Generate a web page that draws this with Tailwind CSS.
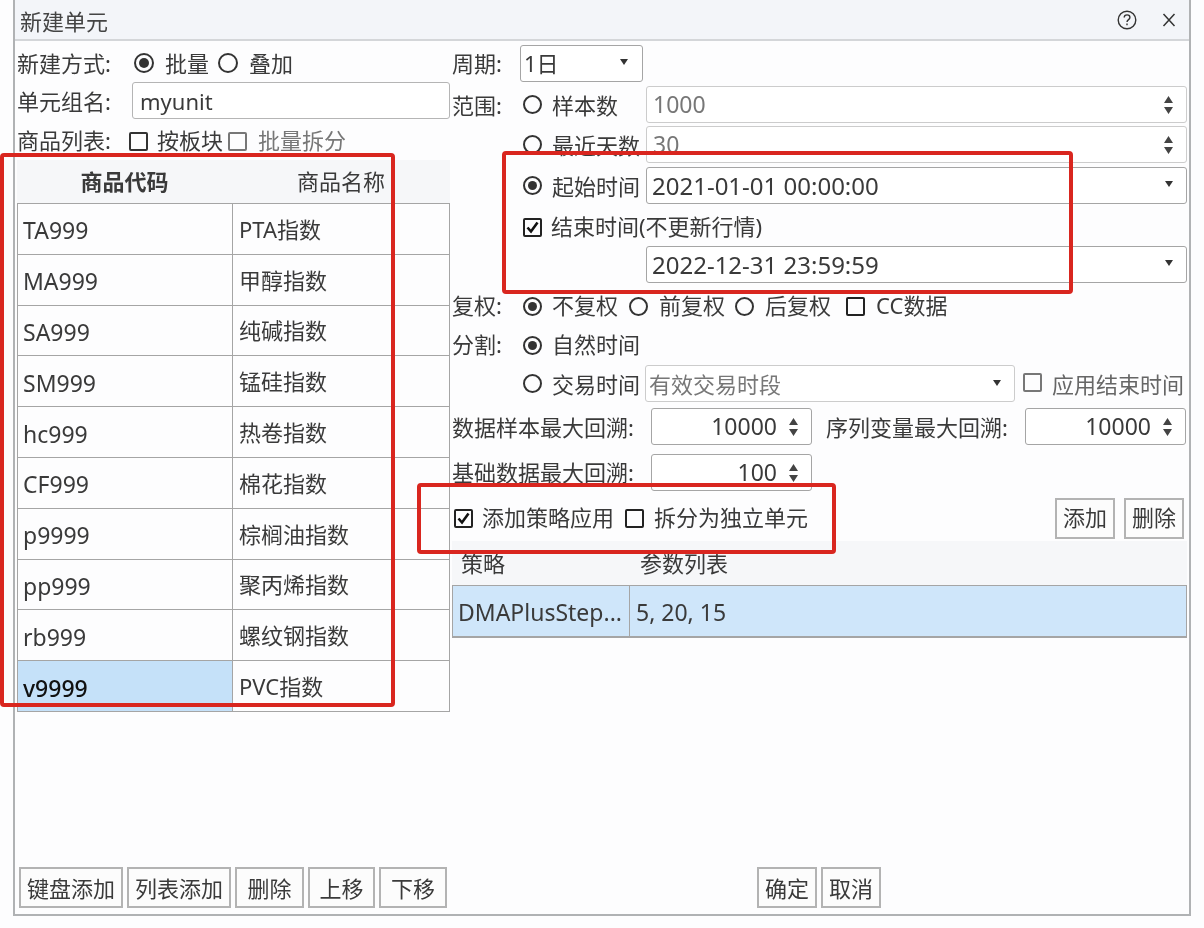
<!DOCTYPE html>
<html lang="zh-CN">
<head>
    <meta charset="UTF-8">
    <title>新建单元</title>
    <script src="https://cdn.jsdelivr.net/npm/@tailwindcss/browser@4"></script>
</head>
<body class="bg-white">
<div class="relative w-[1204px] h-[928px] overflow-hidden bg-[#fdfdfe] text-[22px] leading-none text-[#3a3a3a] font-['Noto_Sans','Noto_Sans_CJK_SC',sans-serif] blur-[0.4px]">
    <!-- Window -->
    <div class="ml-[13px] w-[1178px] h-[916px] flex flex-col border-x-2 border-b-2 border-[#b0b2b4]">
        <!-- Title bar -->
        <div class="h-[41px] shrink-0 flex items-center bg-[#f3f5f9] border-b-2 border-[#d4d6d9]">
            <span class="ml-[5px] pt-[3px] text-[#444]">新建单元</span>
            <svg class="ml-auto" width="20" height="20" viewBox="0 0 20 20" fill="none" stroke="#333" stroke-width="1.4"><circle cx="10" cy="10" r="8.8"/><path d="M7.2 7.6c0-1.7 1.3-2.7 2.9-2.7s2.8 1 2.8 2.5c0 2.3-2.9 2.2-2.9 4.7"/><path d="M10 13.6v1.7"/></svg>
            <svg class="ml-[25px] mr-[13px]" width="14" height="14" viewBox="0 0 14 14" fill="none" stroke="#333" stroke-width="1.5"><path d="M1.5 1L12.5 13M12.5 1L1.5 13"/></svg>
        </div>

        <div class="flex-1 flex min-h-0">
            <!-- Left column -->
            <div class="ml-[2px] w-[433px] shrink-0 flex flex-col pt-[3px] pb-[6px]">
                <div class="h-[38px] flex items-center">
                    <span class="w-[117px]">新建方式:</span>
                    <span class="w-[20px] h-[20px] rounded-full border-2 border-[#333] flex items-center justify-center"><span class="w-[10px] h-[10px] rounded-full bg-[#333]"></span></span>
                    <span class="ml-[11px]">批量</span>
                    <span class="ml-[9px] w-[20px] h-[20px] rounded-full border-2 border-[#333]"></span>
                    <span class="ml-[11px]">叠加</span>
                </div>
                <div class="h-[37px] flex items-center">
                    <span class="w-[115px]">单元组名:</span>
                    <div class="w-[318px] h-[37px] bg-white border border-[#b5b5b5] rounded-[3px] flex items-center pl-[7px]">myunit</div>
                </div>
                <div class="mt-[3px] h-[38px] flex items-center">
                    <span class="w-[112px] pb-[2px]">商品列表:</span>
                    <span class="w-[19px] h-[19px] border-2 border-[#333] rounded-[2px]"></span>
                    <span class="ml-[9px] pb-[2px]">按板块</span>
                    <span class="ml-[5px] w-[19px] h-[19px] border-2 border-[#777] rounded-[2px]"></span>
                    <span class="ml-[11px] pb-[2px] text-[#777]">批量拆分</span>
                </div>

                <!-- Product table -->
                <div class="h-[44px] flex items-center bg-[#f6f7f9] border-b border-[#a5a5a5]">
                    <span class="w-[215px] pb-[2px] text-center font-bold">商品代码</span>
                    <span class="flex-1 pb-[2px] text-center">商品名称</span>
                </div>
                <div class="border-x border-[#a5a5a5]">
                    <div class="h-[50.8px] flex border-b border-[#a5a5a5]"><span class="w-[215px] pl-[5px] pt-[4px] text-[23px] flex items-center border-r border-[#a5a5a5]">TA999</span><span class="pl-[6px] flex items-center">PTA指数</span></div>
                    <div class="h-[50.8px] flex border-b border-[#a5a5a5]"><span class="w-[215px] pl-[5px] pt-[4px] text-[23px] flex items-center border-r border-[#a5a5a5]">MA999</span><span class="pl-[6px] flex items-center">甲醇指数</span></div>
                    <div class="h-[50.8px] flex border-b border-[#a5a5a5]"><span class="w-[215px] pl-[5px] pt-[4px] text-[23px] flex items-center border-r border-[#a5a5a5]">SA999</span><span class="pl-[6px] flex items-center">纯碱指数</span></div>
                    <div class="h-[50.8px] flex border-b border-[#a5a5a5]"><span class="w-[215px] pl-[5px] pt-[4px] text-[23px] flex items-center border-r border-[#a5a5a5]">SM999</span><span class="pl-[6px] flex items-center">锰硅指数</span></div>
                    <div class="h-[50.8px] flex border-b border-[#a5a5a5]"><span class="w-[215px] pl-[5px] pt-[4px] text-[23px] flex items-center border-r border-[#a5a5a5]">hc999</span><span class="pl-[6px] flex items-center">热卷指数</span></div>
                    <div class="h-[50.8px] flex border-b border-[#a5a5a5]"><span class="w-[215px] pl-[5px] pt-[4px] text-[23px] flex items-center border-r border-[#a5a5a5]">CF999</span><span class="pl-[6px] flex items-center">棉花指数</span></div>
                    <div class="h-[50.8px] flex border-b border-[#a5a5a5]"><span class="w-[215px] pl-[5px] pt-[4px] text-[23px] flex items-center border-r border-[#a5a5a5]">p9999</span><span class="pl-[6px] flex items-center">棕榈油指数</span></div>
                    <div class="h-[50.8px] flex border-b border-[#a5a5a5]"><span class="w-[215px] pl-[5px] pt-[4px] text-[23px] flex items-center border-r border-[#a5a5a5]">pp999</span><span class="pl-[6px] flex items-center">聚丙烯指数</span></div>
                    <div class="h-[50.8px] flex border-b border-[#a5a5a5]"><span class="w-[215px] pl-[5px] pt-[4px] text-[23px] flex items-center border-r border-[#a5a5a5]">rb999</span><span class="pl-[6px] flex items-center">螺纹钢指数</span></div>
                    <div class="h-[50.8px] flex border-b border-[#a5a5a5]"><span class="w-[215px] pl-[5px] pt-[4px] text-[23px] flex items-center border-r border-[#a5a5a5] bg-[#c5e1f9] text-[#111] font-medium">v9999</span><span class="pl-[6px] flex items-center">PVC指数</span></div>
                </div>

                <!-- Left buttons -->
                <div class="mt-auto ml-[2px] flex gap-[4px] h-[41px]">
                    <button class="w-[104px] border-2 border-[#b3b3b3] bg-[#fcfcfc]">键盘添加</button>
                    <button class="w-[104px] border-2 border-[#b3b3b3] bg-[#fcfcfc]">列表添加</button>
                    <button class="w-[69px] border-2 border-[#b3b3b3] bg-[#fcfcfc]">删除</button>
                    <button class="w-[67px] border-2 border-[#b3b3b3] bg-[#fcfcfc]">上移</button>
                    <button class="w-[68px] border-2 border-[#b3b3b3] bg-[#fcfcfc]">下移</button>
                </div>
            </div>

            <!-- Right column -->
            <div class="ml-[2px] w-[735px] shrink-0 flex flex-col pt-[4px] pb-[6px]">
                <div class="h-[37px] flex items-center">
                    <span class="w-[68px] pb-[2px]">周期:</span>
                    <div class="w-[123px] h-[37px] bg-white border border-[#a5a5a5] rounded-[3px] flex items-center justify-between pl-[3px] pr-[14px]"><span class="pb-[2px]">1日</span><svg class="mb-[4px]" width="8" height="6" viewBox="0 0 8 6"><path d="M0 0h8L4 6z" fill="#333"/></svg></div>
                </div>
                <div class="mt-[4px] h-[37px] flex items-center">
                    <span class="w-[71px]">范围:</span>
                    <span class="w-[19px] h-[19px] rounded-full border-2 border-[#333]"></span>
                    <span class="ml-[10px] w-[94px]">样本数</span>
                    <div class="w-[541px] h-[37px] bg-white border border-[#ccc] rounded-[3px] flex items-center justify-between pl-[6px] pr-[13px] text-[#777] text-[23px]"><span>1000</span>
                        <svg width="9" height="18" viewBox="0 0 9 18" fill="#444"><path d="M4.5 0L9 7H0zM4.5 18L9 11H0z"/></svg>
                    </div>
                </div>
                <div class="mt-[3px] h-[37px] flex items-center">
                    <span class="ml-[71px] w-[19px] h-[19px] rounded-full border-2 border-[#333]"></span>
                    <span class="ml-[10px] w-[94px]">最近天数</span>
                    <div class="w-[541px] h-[37px] bg-white border border-[#ccc] rounded-[3px] flex items-center justify-between pl-[6px] pr-[13px] text-[#777] text-[23px]"><span>30</span>
                        <svg width="9" height="18" viewBox="0 0 9 18" fill="#444"><path d="M4.5 0L9 7H0zM4.5 18L9 11H0z"/></svg>
                    </div>
                </div>
                <div class="mt-[4px] h-[37px] flex items-center">
                    <span class="ml-[71px] w-[19px] h-[19px] rounded-full border-2 border-[#333] flex items-center justify-center"><span class="w-[9px] h-[9px] rounded-full bg-[#333]"></span></span>
                    <span class="ml-[10px] w-[94px]">起始时间</span>
                    <div class="w-[541px] h-[37px] bg-white border border-[#a5a5a5] rounded-[3px] flex items-center justify-between pl-[5px] pr-[13px] text-[24px]"><span>2021-01-01 00:00:00</span>
                        <svg class="mb-[4px]" width="8" height="6" viewBox="0 0 8 6"><path d="M0 0h8L4 6z" fill="#333"/></svg>
                    </div>
                </div>
                <div class="mt-[4px] h-[38px] flex items-center">
                    <span class="ml-[71px] w-[19px] h-[19px] border-2 border-[#222] rounded-[2px] flex items-center justify-center"><svg width="13" height="13" viewBox="0 0 13 13" fill="none" stroke="#111" stroke-width="2.6"><path d="M1.5 6.5l3.5 4 6.5-9"/></svg></span>
                    <span class="ml-[9px] pb-[2px]">结束时间(不更新行情)</span>
                </div>
                <div class="h-[37px] flex justify-end">
                    <div class="w-[541px] h-[37px] bg-white border border-[#a5a5a5] rounded-[3px] flex items-center justify-between pl-[5px] pr-[13px] text-[24px]"><span>2022-12-31 23:59:59</span>
                        <svg class="mb-[4px]" width="8" height="6" viewBox="0 0 8 6"><path d="M0 0h8L4 6z" fill="#333"/></svg>
                    </div>
                </div>
                <div class="mt-[4px] h-[38px] flex items-center">
                    <span class="w-[71px] pb-[2px]">复权:</span>
                    <span class="w-[19px] h-[19px] rounded-full border-2 border-[#333] flex items-center justify-center"><span class="w-[9px] h-[9px] rounded-full bg-[#333]"></span></span>
                    <span class="ml-[10px] pb-[2px]">不复权</span>
                    <span class="ml-[11px] w-[19px] h-[19px] rounded-full border-2 border-[#333]"></span>
                    <span class="ml-[11px] pb-[2px]">前复权</span>
                    <span class="ml-[10px] w-[19px] h-[19px] rounded-full border-2 border-[#333]"></span>
                    <span class="ml-[11px] pb-[2px]">后复权</span>
                    <span class="ml-[15px] w-[19px] h-[19px] border-2 border-[#222] rounded-[2px]"></span>
                    <span class="ml-[11px] pb-[2px]">CC数据</span>
                </div>
                <div class="mt-[1px] h-[38px] flex items-center">
                    <span class="w-[71px] pb-[2px]">分割:</span>
                    <span class="w-[19px] h-[19px] rounded-full border-2 border-[#333] flex items-center justify-center"><span class="w-[9px] h-[9px] rounded-full bg-[#333]"></span></span>
                    <span class="ml-[10px] pb-[2px]">自然时间</span>
                </div>
                <div class="mt-[1px] h-[37px] flex items-center">
                    <span class="ml-[71px] w-[19px] h-[19px] rounded-full border-2 border-[#333]"></span>
                    <span class="ml-[10px] w-[93px]">交易时间</span>
                    <div class="w-[370px] h-[37px] bg-white border border-[#ccc] rounded-[3px] flex items-center justify-between pl-[3px] pr-[13px] text-[#777]"><span>有效交易时段</span>
                        <svg class="mb-[2px]" width="8" height="6" viewBox="0 0 8 6"><path d="M0 0h8L4 6z" fill="#333"/></svg>
                    </div>
                    <span class="ml-[8px] mb-[2px] w-[19px] h-[19px] border-2 border-[#777] rounded-[2px]"></span>
                    <span class="ml-[10px] text-[#666]">应用结束时间</span>
                </div>
                <div class="mt-[6px] h-[37px] flex items-center">
                    <span class="w-[199px]">数据样本最大回溯:</span>
                    <div class="w-[161px] h-[37px] bg-white border border-[#a5a5a5] rounded-[3px] flex items-center justify-end gap-[12px] pr-[13px] text-[23px]"><span>10000</span>
                        <svg width="9" height="18" viewBox="0 0 9 18" fill="#444"><path d="M4.5 0L9 7H0zM4.5 18L9 11H0z"/></svg>
                    </div>
                    <span class="ml-[14px] w-[199px]">序列变量最大回溯:</span>
                    <div class="w-[161px] h-[37px] bg-white border border-[#a5a5a5] rounded-[3px] flex items-center justify-end gap-[12px] pr-[13px] text-[23px]"><span>10000</span>
                        <svg width="9" height="18" viewBox="0 0 9 18" fill="#444"><path d="M4.5 0L9 7H0zM4.5 18L9 11H0z"/></svg>
                    </div>
                </div>
                <div class="mt-[9px] h-[37px] flex items-center">
                    <span class="w-[199px] pb-[2px]">基础数据最大回溯:</span>
                    <div class="w-[161px] h-[37px] bg-white border border-[#a5a5a5] rounded-[3px] flex items-center justify-end gap-[12px] pr-[13px] text-[23px]"><span>100</span>
                        <svg width="9" height="18" viewBox="0 0 9 18" fill="#444"><path d="M4.5 0L9 7H0zM4.5 18L9 11H0z"/></svg>
                    </div>
                </div>
                <div class="mt-[6px] h-[42px] flex items-center">
                    <span class="ml-[2px] w-[19px] h-[19px] border-2 border-[#222] rounded-[2px] flex items-center justify-center"><svg width="13" height="13" viewBox="0 0 13 13" fill="none" stroke="#111" stroke-width="2.6"><path d="M1.5 6.5l3.5 4 6.5-9"/></svg></span>
                    <span class="ml-[9px] pb-[2px]">添加策略应用</span>
                    <span class="ml-[11px] w-[19px] h-[19px] border-2 border-[#222] rounded-[2px]"></span>
                    <span class="ml-[10px] pb-[2px]">拆分为独立单元</span>
                    <button class="ml-auto w-[60px] h-[41px] pb-[2px] border-2 border-[#b3b3b3] bg-[#fcfcfc]">添加</button>
                    <button class="ml-[9px] mr-[3px] w-[60px] h-[41px] pb-[2px] border-2 border-[#b3b3b3] bg-[#fcfcfc]">删除</button>
                </div>

                <!-- Strategy table -->
                <div class="mt-[2px] h-[45px] flex items-center bg-[#f6f7f9] border-b border-[#a5a5a5]">
                    <span class="ml-[9px] w-[179px]">策略</span>
                    <span>参数列表</span>
                </div>
                <div class="h-[52px] flex bg-[#cfe6fa] border-x border-b-2 border-[#a5a5a5] text-[23px]">
                    <span class="w-[177px] pl-[5px] pt-[3px] flex items-center border-r border-[#a5a5a5]">DMAPlusStep...</span>
                    <span class="pl-[6px] pt-[3px] flex items-center">5, 20, 15</span>
                </div>

                <!-- Confirm buttons -->
                <div class="mt-auto ml-[305px] flex gap-[4px] h-[41px]">
                    <button class="w-[60px] border-2 border-[#b3b3b3] bg-[#fcfcfc]">确定</button>
                    <button class="w-[60px] border-2 border-[#b3b3b3] bg-[#fcfcfc]">取消</button>
                </div>
            </div>
        </div>
    </div>

    <!-- Red annotation boxes -->
    <div class="absolute left-0 top-[153px] w-[395px] h-[554px] border-[4px] border-[#d9261f] rounded-[4px]"></div>
    <div class="absolute left-[502px] top-[151px] w-[571px] h-[143px] border-[4px] border-[#d9261f] rounded-[4px]"></div>
    <div class="absolute left-[417px] top-[483px] w-[419px] h-[71px] border-[4px] border-[#d9261f] rounded-[4px]"></div>
</div>
</body>
</html>
